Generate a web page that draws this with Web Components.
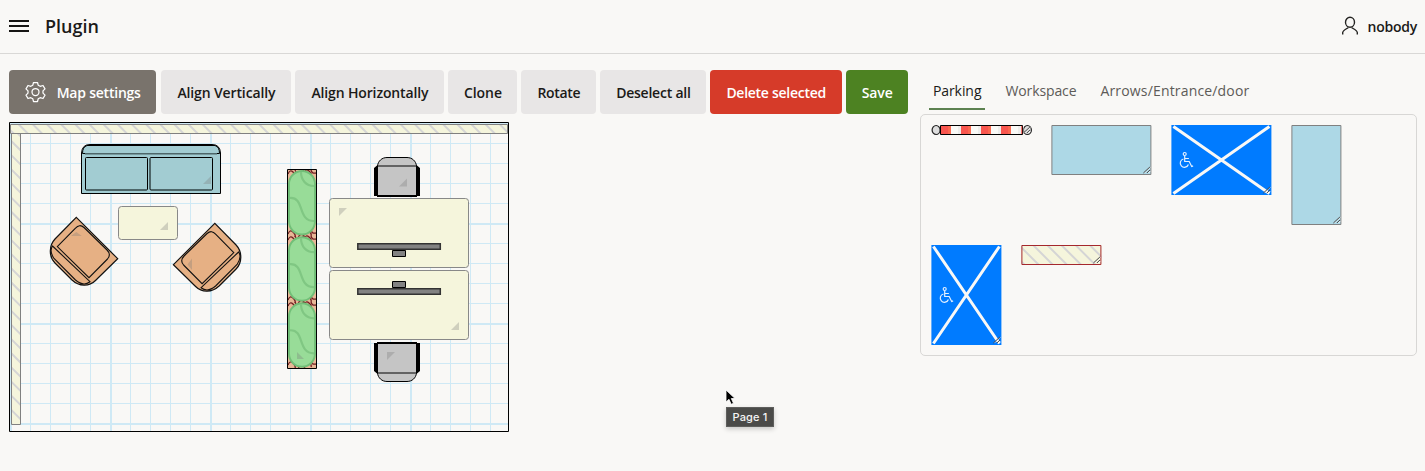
<!DOCTYPE html>
<html lang="en">
<head>
<meta charset="utf-8">
<title>Plugin</title>
<style>
body{margin:0;height:471px;overflow:hidden;background:#f9f8f6;color:#1b1a18;font-family:"Open Sans","Noto Sans",sans-serif}
</style>
</head>
<body>
<plugin-app></plugin-app>
<script>
function define(name, html, setup) {
  const t = document.createElement('template');
  t.innerHTML = html;
  customElements.define(name, class extends HTMLElement {
    connectedCallback() {
      if (this.shadowRoot) return;
      this.attachShadow({ mode: 'open' }).append(t.content.cloneNode(true));
      if (setup) setup(this, this.shadowRoot);
    }
  });
}

/* Label whose tracking is adjusted to an exact width */
define('fit-text', `<style>:host{display:inline-block;white-space:nowrap;flex:none}span{display:inline-block}</style><span><slot></slot></span>`, (el, root) => {
  const span = root.querySelector('span'), w = parseFloat(el.getAttribute('w'));
  el.style.width = w + 'px';
  span.style.letterSpacing = ((w - span.getBoundingClientRect().width) / el.textContent.length) + 'px';
});

define('app-header', `<style>
:host{display:flex;align-items:center;height:53px;border-bottom:1px solid #d9d8d6;padding:0 8px 0 9px}
.menu{margin-bottom:1px}
.title{font-size:18px;font-weight:600;margin:0 0 2px 16px}
.user{margin:0 0 1px auto;display:flex;align-items:center;font-size:14px;font-weight:650}
.user svg{margin-right:9px}
</style>
<svg class="menu" width="20" height="12" viewBox="0 0 20 12" fill="#161513"><path d="M0 0h20v2H0zM0 5h20v2H0zM0 10h20v2H0z"/></svg>
<fit-text class="title" w="54">Plugin</fit-text>
<div class="user"><svg width="18" height="20" viewBox="0 0 18 20" fill="none" stroke="#252422" stroke-width="1.4"><ellipse cx="9" cy="6.2" rx="4.5" ry="5"/><path d="M1.7 18.6v-2.1c0-1.8 3.7-3.6 5.7-5M16.3 18.6v-2.1c0-1.8-3.7-3.6-5.7-5"/></svg><fit-text w="49.5">nobody</fit-text></div>`);

define('tool-button', `<style>
:host{display:flex;box-sizing:border-box;height:44px;align-items:center;justify-content:center;border-radius:4px;background:#e8e6e6;font-size:14px;font-weight:620;flex:none}
:host([kind=settings]){background:#79736c;color:#fff}
:host([kind=danger]){background:#d63b29;color:#fff}
:host([kind=save]){background:#4d8222;color:#fff}
</style><slot></slot>`, el => { el.style.width = el.getAttribute('width') + 'px'; });

define('tool-bar', `<style>
:host{display:flex;gap:4px}
svg{margin-right:11px}
</style>
<tool-button kind="settings" width="147.4" style="margin-right:1px"><svg width="21" height="22" viewBox="-10.5 -11 21 22" fill="none" stroke="#fff" stroke-width="1.25" stroke-linejoin="round"><circle r="3.5"/><path d="M-2-9.5h4l.7 2.7 2 1.1 2.8-.8 2 3.4-2 2v2.2l2 2-2 3.4-2.8-.8-2 1.1-.7 2.7h-4l-.7-2.7-2-1.1-2.8.8-2-3.4 2-2v-2.2l-2-2 2-3.4 2.8.8 2-1.1z"/></svg><fit-text w="84">Map settings</fit-text></tool-button>
<tool-button width="130"><fit-text w="98">Align Vertically</fit-text></tool-button>
<tool-button width="149"><fit-text w="117">Align Horizontally</fit-text></tool-button>
<tool-button width="69"><fit-text w="38">Clone</fit-text></tool-button>
<tool-button width="75"><fit-text w="43">Rotate</fit-text></tool-button>
<tool-button width="106"><fit-text w="74.5">Deselect all</fit-text></tool-button>
<tool-button kind="danger" width="131.5"><fit-text w="99.5">Delete selected</fit-text></tool-button>
<tool-button kind="save" width="62.5"><fit-text w="31">Save</fit-text></tool-button>`);

define('floor-map', `<style>:host{display:block;margin-top:8px;height:310px}svg{display:block}</style>
<svg width="500" height="310" viewBox="9 122 500 310">
<defs>
<g id="arm"><path fill="#e6b084" stroke="#111" stroke-width="1.2" d="M76.3 217.3 117.7 258.7 95.5 280.5C89 287 79 286.5 72 280L55 263C49 257 48.5 246 55 239Z"/><path fill="none" stroke="#111" stroke-width="1.1" d="M57.3 246.6 75.5 228.2Q79.5 223.500 84 227.500L107 250Q111.500 254.500 107.500 259L89 277.700ZM52.500 246 90 281.700Q83.5 287 75.5 280L54 258.5Q49 251 52.500 246Z"/></g>
<g id="chair"><path fill="#c5c5c5" stroke="#000" d="M377.5 196V166C378 161 382 157.5 387 157.5H407C412 157.5 416 161 416.5 166V196Z"/><path stroke="#000" stroke-width="2" d="M377 196H417"/><path d="M374 168 377 165.500H378V196H374ZM420 168 417 165.500H416V196H420Z"/><path stroke="#636363" stroke-width="2" d="M378 166H416"/></g>
<g id="bush"><rect x="289" y="171" width="26" height="63.500" rx="13" fill="#98dc98" stroke="#72bf78" stroke-width="2"/><path d="M301 172C301 180 306 186 314 186M290 198C305 197 297 221 314 221" fill="none" stroke="#80c783" stroke-width="2.200"/></g>
<g id="curl"><path d="M288 4q2-5 5-2t2 5M295 0q2 5 5 3t4-3M304 3q2-5 5-2t2 5M311 0q1 4 5 3M298 8q2-5 5-3t2 5" fill="none" stroke="#711f22" stroke-width="1.300"/></g>
<g id="screen"><path fill="#828282" stroke="#000" d="M392.500 250.500h13v6h-13z"/><path fill="#828282" stroke="#333" stroke-width="1.500" d="M357.800 243.800h82.500v5.400h-82.500z"/></g>
<clipPath id="bed"><path d="M287.500 169.500h29v199h-29z"/></clipPath>
</defs>
<g id="grid" stroke="#cfe9f5" fill="none"></g>
<g id="walls"></g>
<path fill="#a2ccd2" stroke="#000" d="M81.500 193.500V153Q82 144.500 90 144.500H212Q220 144.500 220.500 153V193.500Z"/>
<g fill="none" stroke="#000"><path d="M87 145.500H215Q219.500 147 219.500 153.500H82.500Q82.500 147 87 145.500Z"/><rect x="85.500" y="157.500" width="62" height="32.500" rx="1"/><rect x="150" y="157.500" width="62.500" height="32.500" rx="1"/><path stroke="#4d6669" stroke-width="1.600" d="M85 153.800H217M87 189.700H146M151 189.700H211M149.800 159V189"/></g>
<g fill="#f5f5dc" stroke="#888"><rect x="118.500" y="206.500" width="59" height="33" rx="3"/><rect x="329.500" y="198.500" width="139" height="69" rx="3"/><rect x="329.500" y="270.500" width="139" height="69" rx="3"/></g>
<use href="#arm"/><use href="#arm" transform="translate(291.100 6) scale(-1 1)"/>
<g clip-path="url(#bed)"><path d="M287.500 169.500h29v199h-29z" fill="#e7b796"/>
<use href="#curl" y="170"/><use href="#curl" y="230"/><use href="#curl" y="236"/><use href="#curl" y="296"/><use href="#curl" y="302"/><use href="#curl" y="361"/>
<use href="#bush"/><use href="#bush" y="66.200"/><use href="#bush" y="132.300"/></g>
<path d="M287.500 169.500h29v199h-29z" fill="none" stroke="#000"/>
<use href="#chair"/><use href="#chair" transform="translate(0 539) scale(1 -1)"/>
<use href="#screen"/><use href="#screen" transform="translate(0 538) scale(1 -1)"/>
<g fill="#777" fill-opacity=".3"><path d="M211 176v8h-8zM168 222v8h-8zM407 178.500v8h-8zM339 216v-8h8zM459 322v8h-8zM387 360v-8h8zM297 352v7h7zM76.300 232l5.500 4h-11zM192 258.500v11.500l-4.500-5.500z"/></g>
<path d="M9.500 122.500h499v309h-499z" fill="none" stroke="#000"/>
</svg>`, (el, root) => {
  let thin = '', bold = '';
  for (let i = 0; i < 25; i++) i % 5 ? thin += `M${10.5 + 20 * i} 123V431` : bold += `M${11 + 20 * i} 123V431`;
  for (let i = 0; i < 16; i++) i % 5 ? thin += `M10 ${123.5 + 20 * i}H508` : bold += `M10 ${124 + 20 * i}H508`;
  root.querySelector('#grid').innerHTML = `<path d="${thin}"/><path stroke-width="2" d="${bold}"/>`;
  let top = '', left = '';
  for (let i = -2; i < 38; i++) top += `M${27.5 + 14.15 * i - 14.15} 119l20 20`;
  for (let i = -2; i < 24; i++) left += `M6 ${121.6 + 14.15 * i}l20 20`;
  root.querySelector('#walls').innerHTML = `<clipPath id="ct"><path d="M10.500 124.500h497v9h-497z"/></clipPath><clipPath id="cl"><path d="M11.500 133.500h9v291h-9z"/></clipPath>
  <path fill="#f5f5dc" d="M10.500 124.500h497v9h-497zM11.500 133.500h9v291h-9z"/>
  <g stroke="#d5d5d5" stroke-width="2"><path clip-path="url(#ct)" d="${top}"/><path clip-path="url(#cl)" d="${left}"/></g>
  <path fill="none" stroke="#808080" d="M10.500 124.500h497v9h-497zM11.500 133.500h9v291h-9z"/>`;
});

define('tab-list', `<style>
:host{display:flex;font-size:14px;font-weight:480;height:40px;color:#5d5b58;padding-left:8.500px}
div{box-sizing:border-box;height:40px;padding:11px 4px 0;line-height:20px;margin-right:16px}
.on{color:#1b1a18;border-bottom:2px solid #5c8150}
</style><div class="on"><fit-text w="48.500">Parking</fit-text></div><div><fit-text w="71">Workspace</fit-text></div><div><fit-text w="149">Arrows/Entrance/door</fit-text></div>`);

/* Palette shape with a resize grip in its lower right corner */
define('palette-item', `<style>
:host{display:block;flex:none}svg{display:block;overflow:visible}
</style><svg></svg>`, (el, root) => {
  const w = +el.getAttribute('w'), h = +el.getAttribute('h'), kind = el.getAttribute('kind'), svg = root.querySelector('svg');
  svg.setAttribute('width', w); svg.setAttribute('height', h);
  let s = '';
  if (kind === 'barrier') {
    s = '<g fill="#ddd" stroke="#222" stroke-width="1.200"><ellipse cx="4.700" cy="5" rx="4" ry="4.500"/><ellipse cx="96" cy="5" rx="4" ry="4.500"/></g><path fill="#fafaf7" d="M9 .5h83v9H9z"/>';
    for (let i = 0; i < 4; i++) s += `<path fill="#f8564f" d="M${9.6 + 20 * i} 1h10v8h-10z"/><path fill="#fb6a50" d="M${16.6 + 20 * i} 1h3v8h-3z"/><path fill="#eeeeec" d="M${26.6 + 20 * i} 1h3v8h-3z"/>`;
    s += '<path fill="none" stroke="#000" d="M9.100 .500h82v9h-82z"/><path stroke="#f8564f" d="M90.300 1v8"/>';
  } else if (kind === 'disabled') {
    s = `<path fill="#007bff" d="M0 0h${w}v${h}H0z"/><path stroke="#f9f8f6" stroke-width="3" d="M2 1.500 ${w - 2} ${h - 1.5}M${w - 2} 1.500 2 ${h - 1.5}"/>
    <g transform="translate(7 ${h / 2 - 8})" fill="none" stroke="#e5f1ff" stroke-width="1.200"><circle cx="6.300" cy="2" r="1.500"/><path d="M6.300 4v5.500h4.500l2.500 5 1.400-.600M6.300 6.500h4.200M5 7a4.200 4.200 0 1 0 5 5.500"/></g>`;
  } else if (kind === 'hatch') {
    let p = '';
    for (let i = -1; i < 7; i++) p += `M${-5.500 + 14.15 * i} -3l26 26`;
    s = `<clipPath id="c"><path d="M0 0h80v20H0z"/></clipPath><path fill="#f5f5dc" d="M0 0h80v20H0z"/><path clip-path="url(#c)" stroke="#d5d5d5" stroke-width="2" d="${p}"/><path fill="none" stroke="#a5282d" d="M.5 .500h79v19H.5z"/>`;
  } else s = `<path fill="#add8e6" stroke="#808080" d="M.500 .500h${w - 1}v${h - 1}H.500z"/>`;
  s += `<path stroke="#fff" stroke-opacity=".8" d="M${w - 7} ${h - 2}l6-6M${w - 3} ${h - 2}l2-2"/><path stroke="#444" d="M${w - 8} ${h - 2}l6.500-6M${w - 4.500} ${h - 2}l3-3"/>`;
  svg.innerHTML = `<g transform="translate(.4 0)">${s}</g>`;
});

define('shape-palette', `<style>
:host{display:block;width:496.600px}
.box{display:flex;flex-wrap:wrap;align-items:flex-start;align-content:flex-start;gap:20px;box-sizing:border-box;height:242px;margin-top:4px;padding:10px 9px 10px 10px;border:1px solid #d8d7d5;border-radius:5px}
</style><tab-list></tab-list><div class="box">
<palette-item kind="barrier" w="100" h="10"></palette-item><palette-item w="100" h="50"></palette-item><palette-item kind="disabled" w="100" h="70"></palette-item><palette-item w="50" h="100"></palette-item><palette-item kind="disabled" w="70" h="100"></palette-item><palette-item kind="hatch" w="80" h="20"></palette-item></div>`);

define('page-tip', `<style>
:host{position:absolute;left:724.500px;top:389px;display:block}
svg{display:block}
div{box-sizing:border-box;width:48px;height:20px;margin:1px 0 0 1.500px;background:#4b4b49;border:1px solid #5e5e5c;color:#f4f4f4;font:500 11px/18px Inter,sans-serif;text-align:center;box-shadow:0 2px 5px #0003}
</style><svg width="12" height="17" viewBox="0 0 12 17"><path d="M1 1v12l3-2.700 2.200 5 2.300-1-2.200-4.800H10z" fill="#000" stroke="#fff" stroke-width=".8"/></svg><div><fit-text w="35">Page 1</fit-text></div>`);

define('plugin-app', `<style>
:host{display:block}
main{display:flex;justify-content:space-between;padding:16px 8px 0 9px}
</style><app-header></app-header><main><section><tool-bar></tool-bar><floor-map></floor-map></section><shape-palette></shape-palette></main><page-tip></page-tip>`);
</script>
</body>
</html>
